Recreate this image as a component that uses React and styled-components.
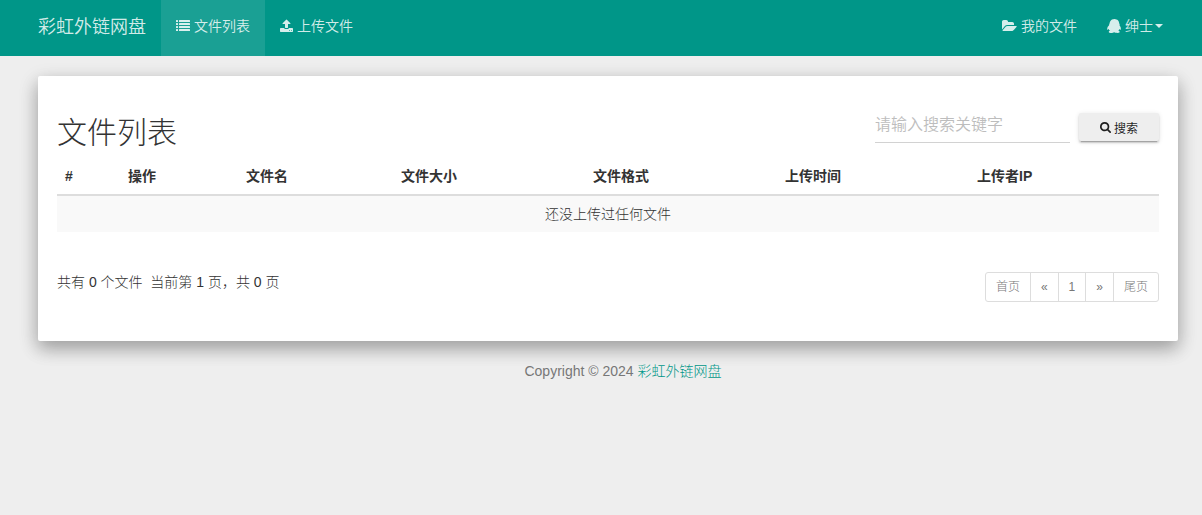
import React from "react"
import styled, { createGlobalStyle } from "styled-components"

const GlobalStyle = createGlobalStyle`
  * {
    box-sizing: border-box;
  }

  body {
    margin: 0;
    background-color: #eee;
    color: #333;
    font-family: "Liberation Sans", "Noto Sans CJK SC", sans-serif;
    font-size: 14px;
    font-weight: 300;
    line-height: 20px;
  }

  a {
    color: #009688;
    text-decoration: none;
  }

  input,
  button {
    font-family: inherit;
  }
`

const Navbar = styled.nav`
  display: flex;
  justify-content: space-between;
  min-height: 56px;
  padding: 0 24px 0 23px;
  background-color: #009688;
  font-weight: 350;
`

const NavGroup = styled.div`
  display: flex;
`

const Brand = styled.a`
  padding: 17px 15px 15px;
  color: rgba(255, 255, 255, 0.84);
  font-size: 18px;
`

const NavLink = styled.a`
  display: flex;
  align-items: center;
  gap: 4px;
  padding: 0 15px 4px;
  color: rgba(255, 255, 255, 0.84);
  background-color: ${(p) => (p.$active ? "rgba(255, 255, 255, 0.1)" : "transparent")};
`

const Caret = styled.span`
  margin-left: -2px;
  border-top: 4px solid;
  border-right: 4px solid transparent;
  border-left: 4px solid transparent;
`

const Icon = styled.svg`
  height: ${(p) => p.$size || 14}px;
  fill: currentColor;
`

const Card = styled.main`
  margin: 20px 24px 0 38px;
  padding: 36px 19px 39px;
  border-radius: 2px;
  background-color: #fff;
  box-shadow: 0 8px 17px 0 rgba(0, 0, 0, 0.2), 0 6px 20px 0 rgba(0, 0, 0, 0.19);
`

const Header = styled.header`
  display: flex;
  justify-content: space-between;
  align-items: flex-start;
  height: 46px;
`

const Title = styled.h2`
  margin: 0;
  padding-top: 4px;
  font-size: 30px;
  font-weight: 300;
  line-height: 33px;
`

const SearchForm = styled.form`
  display: flex;
  align-items: flex-start;
  gap: 9px;
`

const SearchInput = styled.input`
  width: 195px;
  height: 31px;
  padding: 0 0 4px;
  border: 0;
  border-bottom: 1px solid #d2d2d2;
  background: none;
  color: #333;
  font-size: 16px;
  font-weight: 350;
  outline: none;

  &::placeholder {
    color: #bdbdbd;
    opacity: 1;
  }
`

const SearchButton = styled.button`
  display: flex;
  align-items: center;
  justify-content: center;
  gap: 3px;
  width: 80px;
  height: 28px;
  margin-top: 1px;
  padding: 0;
  border: 0;
  border-radius: 2px;
  background-color: #eee;
  color: rgba(0, 0, 0, 0.87);
  font-size: 12px;
  font-weight: 400;
  box-shadow: 0 2px 2px 0 rgba(0, 0, 0, 0.14), 0 3px 1px -2px rgba(0, 0, 0, 0.2),
    0 1px 5px 0 rgba(0, 0, 0, 0.12);
  cursor: pointer;
`

const Table = styled.table`
  width: 100%;
  table-layout: fixed;
  border-collapse: separate;
  border-spacing: 0;
`

const Th = styled.th`
  width: ${(p) => (p.$width ? `${p.$width}px` : "auto")};
  padding: 8px;
  border-bottom: 2px solid #ddd;
  text-align: left;
  font-weight: 700;
`

const EmptyCell = styled.td`
  padding: 8px;
  background-color: #f9f9f9;
  text-align: center;
`

const Footer = styled.div`
  display: flex;
  justify-content: space-between;
  align-items: flex-start;
  margin-top: 40px;
`

const Count = styled.b`
  color: #333;
  font-weight: 400;
`

const Summary = styled.div`
  white-space: pre;
`

const Pagination = styled.ul`
  display: flex;
  margin: 0;
  padding: 0;
  list-style: none;
`

const PageLink = styled.a`
  display: block;
  margin-left: -1px;
  padding: 5px 10px;
  border: 1px solid #ddd;
  border-radius: ${(p) => p.$radius || "0"};
  color: #777;
  font-size: 12px;
  line-height: 18px;
`

const Copyright = styled.footer`
  margin: 20px 0 0 44px;
  color: #777;
  text-align: center;
`

const ListIcon = () => (
  <Icon viewBox="0 0 1792 1792" aria-hidden="true">
    {[128, 512, 896, 1280].map((y) => (
      <g key={y}>
        <rect x="0" y={y} width="256" height="256" rx="32" />
        <rect x="384" y={y} width="1408" height="256" rx="32" />
      </g>
    ))}
  </Icon>
)

const UploadIcon = () => (
  <Icon viewBox="64 0 1664 1792" aria-hidden="true">
    <path d="M1344 1472q0-26-19-45t-45-19-45 19-19 45 19 45 45 19 45-19 19-45zm256 0q0-26-19-45t-45-19-45 19-19 45 19 45 45 19 45-19 19-45zm128-224v320q0 40-28 68t-68 28h-1472q-40 0-68-28t-28-68v-320q0-40 28-68t68-28h427q21 56 70.5 92t110.5 36h256q61 0 110.5-36t70.5-92h427q40 0 68 28t28 68zm-325-648q-17 40-59 40h-256v448q0 26-19 45t-45 19h-256q-26 0-45-19t-19-45v-448h-256q-42 0-59-40-17-39 14-69l448-448q18-19 45-19t45 19l448 448q31 30 14 69z" />
  </Icon>
)

const FolderIcon = () => (
  <Icon viewBox="0 0 1920 1792" aria-hidden="true">
    <path d="M1879 952q0 31-31 66l-336 396q-43 51-120.5 86.5t-143.5 35.5h-1088q-34 0-60.5-13t-26.5-43q0-31 31-66l336-396q43-51 120.5-86.5t143.5-35.5h1088q34 0 60.5 13t26.5 43zm-343-344v160h-832q-94 0-197 47.5t-164 119.5l-337 396-5 6q0-4-.5-12.5t-.5-12.5v-960q0-92 66-158t158-66h320q92 0 158 66t66 158v32h544q92 0 158 66t66 158z" />
  </Icon>
)

const QqIcon = () => (
  <Icon viewBox="0 0 1792 1792" aria-hidden="true">
    <path d="M270 806q-8-19-8-52 0-20 11-49t24-45q-1-22 7.5-53t22.5-43q0-139 92.5-288.5t217.5-209.5q139-66 324-66 133 0 266 55 49 21 90 48t71 56 55 68 42 74 32.5 84.5 25.5 89.5 22 98l1 5q55 83 55 150 0 14-9 40t-9 38q0 1 1.5 3.5t3.5 5 2 3.5q77 114 120.5 214.5t43.5 208.5q0 43-19.5 100t-55.5 57q-9 0-19.5-7.5t-19-17.5-19-26-16-26-13.5-26-9-17.5q-1-1-3-1l-5 4q-59 154-132 223 20 20 61.5 38.5t69 41.5 35.5 65q-2 4-4 16t-7 18q-64 97-302 97-53 0-110.5-9t-98-20-104.5-30q-15-5-23-7-14-4-46-4.5t-40-1.5q-41 45-127.5 65t-168.5 20q-35 0-69-1.5t-93-9-101-20.5-74.5-40-32.5-64q0-40 10-59.5t41-48.5q11-2 40.5-13t49.5-12q4 0 14-2 2-2 2-4l-2-3q-48-11-108-105.5t-73-156.5l-5-3q-4 0-12 20-18 41-54.5 74.5t-77.5 37.5h-1q-4 0-6-4.5t-5-5.5q-23-54-23-100 0-275 252-466z" />
  </Icon>
)

const SearchIcon = () => (
  <Icon $size={11} viewBox="64 128 1664 1664" aria-hidden="true">
    <path d="M1216 832q0-185-131.5-316.5t-316.5-131.5-316.5 131.5-131.5 316.5 131.5 316.5 316.5 131.5 316.5-131.5 131.5-316.5zm512 832q0 52-38 90t-90 38q-54 0-90-38l-343-342q-179 124-399 124-143 0-273.5-55.5t-225-150-150-225-55.5-273.5 55.5-273.5 150-225 225-150 273.5-55.5 273.5 55.5 225 150 150 225 55.5 273.5q0 220-124 399l343 343q37 37 37 90z" />
  </Icon>
)

const columns = [
  { name: "#", width: 63 },
  { name: "操作", width: 118 },
  { name: "文件名", width: 155 },
  { name: "文件大小", width: 192 },
  { name: "文件格式", width: 192 },
  { name: "上传时间", width: 192 },
  { name: "上传者IP" },
]

const App = () => (
  <>
    <GlobalStyle />
    <Navbar>
      <NavGroup>
        <Brand href="#">彩虹外链网盘</Brand>
        <NavLink href="#" $active>
          <ListIcon />
          文件列表
        </NavLink>
        <NavLink href="#">
          <UploadIcon />
          上传文件
        </NavLink>
      </NavGroup>
      <NavGroup>
        <NavLink href="#">
          <FolderIcon />
          我的文件
        </NavLink>
        <NavLink href="#">
          <QqIcon />
          绅士
          <Caret />
        </NavLink>
      </NavGroup>
    </Navbar>

    <Card>
      <Header>
        <Title>文件列表</Title>
        <SearchForm onSubmit={(e) => e.preventDefault()}>
          <SearchInput type="text" aria-label="搜索关键字" placeholder="请输入搜索关键字" />
          <SearchButton type="submit">
            <SearchIcon />
            搜索
          </SearchButton>
        </SearchForm>
      </Header>

      <Table>
        <thead>
          <tr>
            {columns.map((col) => (
              <Th key={col.name} $width={col.width}>
                {col.name}
              </Th>
            ))}
          </tr>
        </thead>
        <tbody>
          <tr>
            <EmptyCell colSpan={columns.length}>还没上传过任何文件</EmptyCell>
          </tr>
        </tbody>
      </Table>

      <Footer>
        <Summary>
          共有 <Count>0</Count> 个文件{"  "}当前第 <Count>1</Count> 页，共 <Count>0</Count> 页
        </Summary>
        <Pagination>
          <li><PageLink href="#" $radius="3px 0 0 3px">首页</PageLink></li>
          <li><PageLink href="#">«</PageLink></li>
          <li><PageLink href="#">1</PageLink></li>
          <li><PageLink href="#">»</PageLink></li>
          <li><PageLink href="#" $radius="0 3px 3px 0">尾页</PageLink></li>
        </Pagination>
      </Footer>
    </Card>

    <Copyright>
      Copyright © 2024 <a href="#">彩虹外链网盘</a>
    </Copyright>
  </>
)

export default App
